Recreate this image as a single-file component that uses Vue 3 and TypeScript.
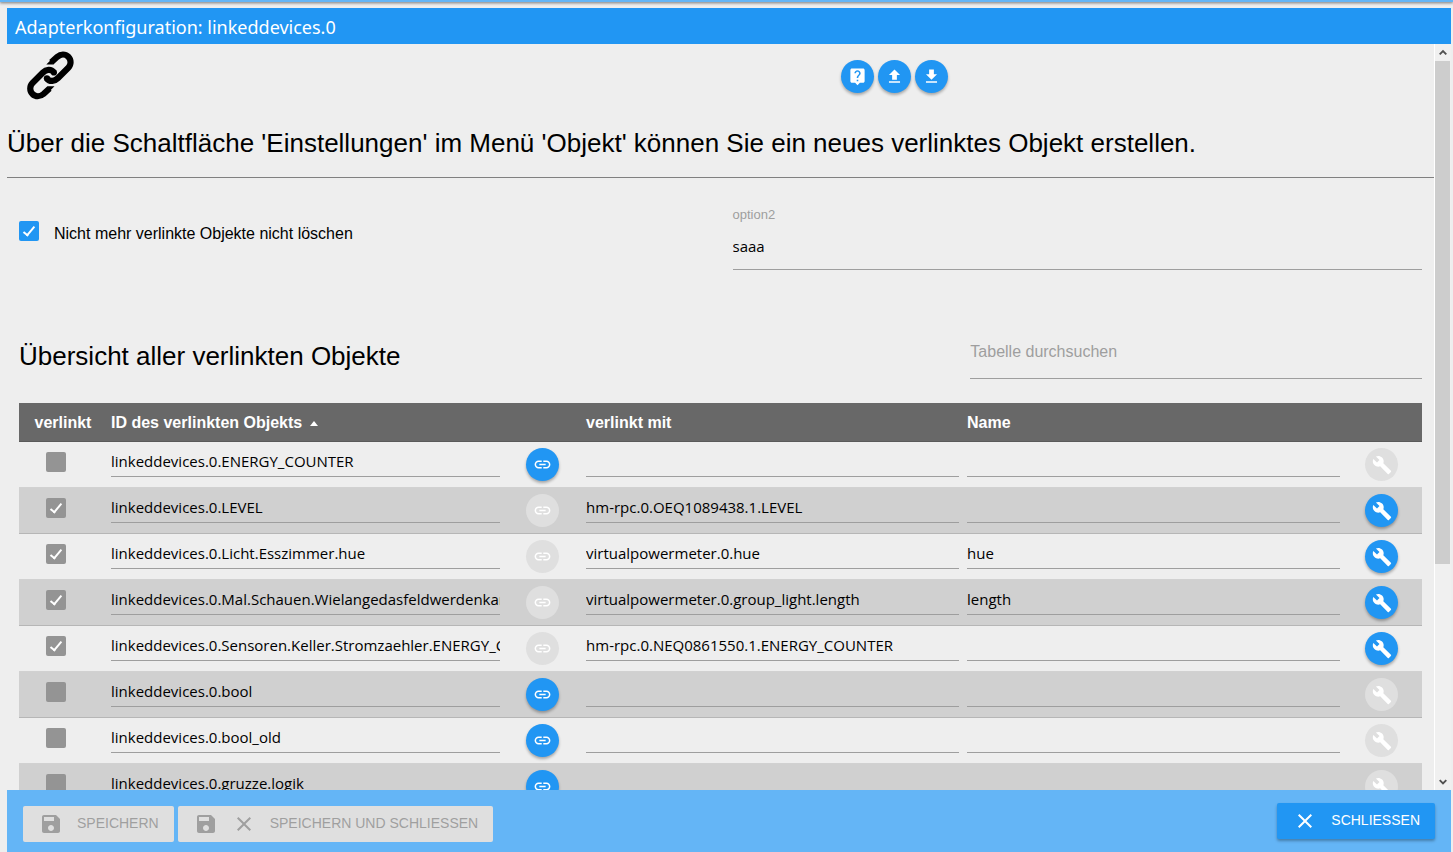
<script setup lang="ts">
import { ref, computed } from 'vue'

interface LinkedObject {
  id: string
  target: string
  name: string
  linked: boolean
}

const icons = {
  help: 'M19 2H5c-1.11 0-2 .9-2 2v14c0 1.1.89 2 2 2h4l3 3 3-3h4c1.1 0 2-.9 2-2V4c0-1.1-.9-2-2-2zm-6 16h-2v-2h2v2zm2.07-7.75l-.9.92C13.45 11.9 13 12.5 13 14h-2v-.5c0-1.1.45-2.1 1.17-2.83l1.24-1.26c.37-.36.59-.86.59-1.41 0-1.1-.9-2-2-2s-2 .9-2 2H8c0-2.21 1.79-4 4-4s4 1.79 4 4c0 .88-.36 1.68-.93 2.25z',
  upload: 'M9 16h6v-6h4l-7-7-7 7h4zm-4 2h14v2H5z',
  download: 'M19 9h-4V3H9v6H5l7 7 7-7zM5 18v2h14v-2H5z',
  link: 'M3.9 12c0-1.71 1.39-3.1 3.1-3.1h4V7H7c-2.76 0-5 2.24-5 5s2.24 5 5 5h4v-1.9H7c-1.71 0-3.1-1.39-3.1-3.1zM8 13h8v-2H8v2zm9-6h-4v1.9h4c1.71 0 3.1 1.39 3.1 3.1s-1.39 3.1-3.1 3.1h-4V17h4c2.76 0 5-2.24 5-5s-2.24-5-5-5z',
  build: 'M22.7 19l-9.1-9.1c.9-2.3.4-5-1.5-6.9-2-2-5-2.4-7.4-1.3L9 6 6 9 1.6 4.7C.4 7.1.9 10.1 2.9 12.1c1.9 1.9 4.6 2.4 6.9 1.5l9.1 9.1c.4.4 1 .4 1.4 0l2.3-2.3c.5-.4.5-1.1.1-1.4z',
  save: 'M17 3H5c-1.11 0-2 .9-2 2v14c0 1.1.89 2 2 2h14c1.1 0 2-.9 2-2V7l-4-4zm-5 16c-1.66 0-3-1.34-3-3s1.34-3 3-3 3 1.34 3 3-1.34 3-3 3zm3-10H5V5h10v4z',
  close: 'M19 6.41L17.59 5 12 10.59 6.41 5 5 6.41 10.59 12 5 17.59 6.41 19 12 13.41 17.59 19 19 17.59 13.41 12z',
}

const tools = [
  { label: 'Hilfe', path: icons.help },
  { label: 'Hochladen', path: icons.upload },
  { label: 'Herunterladen', path: icons.download },
]

const keepUnlinked = ref(true)
const option2 = ref('saaa')
const search = ref('')

const objects = ref<LinkedObject[]>([
  { id: 'linkeddevices.0.ENERGY_COUNTER', target: '', name: '', linked: false },
  { id: 'linkeddevices.0.LEVEL', target: 'hm-rpc.0.OEQ1089438.1.LEVEL', name: '', linked: true },
  { id: 'linkeddevices.0.Licht.Esszimmer.hue', target: 'virtualpowermeter.0.hue', name: 'hue', linked: true },
  { id: 'linkeddevices.0.Mal.Schauen.Wielangedasfeldwerdenkann', target: 'virtualpowermeter.0.group_light.length', name: 'length', linked: true },
  { id: 'linkeddevices.0.Sensoren.Keller.Stromzaehler.ENERGY_COUNTER', target: 'hm-rpc.0.NEQ0861550.1.ENERGY_COUNTER', name: '', linked: true },
  { id: 'linkeddevices.0.bool', target: '', name: '', linked: false },
  { id: 'linkeddevices.0.bool_old', target: '', name: '', linked: false },
  { id: 'linkeddevices.0.gruzze.logik', target: '', name: '', linked: false },
])

const visibleObjects = computed(() => {
  const term = search.value.toLowerCase()
  return objects.value.filter((o) => `${o.id} ${o.target} ${o.name}`.toLowerCase().includes(term))
})
</script>

<template>
  <div class="page">
    <div class="strip"></div>
    <header class="title">Adapterkonfiguration: linkeddevices.0</header>

    <div class="body">
      <main class="content">
        <div class="top">
          <svg class="logo" viewBox="0 0 50 50" aria-hidden="true">
            <g fill="none" stroke="#000" stroke-width="6.2">
              <path d="M23.5 37.5 17.5 43C14 46 9.5 46 6.5 43 3.5 40 3.5 35 6.5 32L17 21.5C20 18.5 25 17.5 28 21.5" />
              <path d="M25.3 11.3 31.3 5.8C34.8 2.8 39.3 2.8 42.3 5.8 45.3 8.8 45.3 13.8 42.3 16.8L31.8 27.3C28.8 30.3 23.8 31.3 20.8 27.3" />
            </g>
            <path d="M21.3 35.3H28.5L24 39.8ZM27.5 13.5H20.3L24.8 9Z" />
            <circle cx="27.9" cy="21.5" r="3.1" />
            <circle cx="20.9" cy="27.3" r="3.1" />
          </svg>
          <div class="tools">
            <button v-for="t in tools" :key="t.label" type="button" class="round" :aria-label="t.label">
              <svg viewBox="0 0 24 24"><path :d="t.path" /></svg>
            </button>
          </div>
        </div>

        <h1 class="intro">Über die Schaltfläche 'Einstellungen' im Menü 'Objekt' können Sie ein neues verlinktes Objekt erstellen.</h1>

        <div class="options">
          <div class="option keep">
            <input id="keep" v-model="keepUnlinked" type="checkbox" class="check" />
            <label for="keep">Nicht mehr verlinkte Objekte nicht löschen</label>
          </div>
          <div class="option">
            <label for="option2" class="small-label">option2</label>
            <input id="option2" v-model="option2" type="text" class="field tall" />
          </div>
        </div>

        <div class="overview">
          <h2>Übersicht aller verlinkten Objekte</h2>
          <input v-model="search" type="text" class="field search" placeholder="Tabelle durchsuchen" aria-label="Tabelle durchsuchen" />
        </div>

        <div class="table-wrap">
          <table>
            <colgroup>
              <col class="c-linked" />
              <col class="c-id" />
              <col class="c-action" />
              <col />
              <col />
              <col class="c-action" />
            </colgroup>
            <thead>
              <tr>
                <th class="center">verlinkt</th>
                <th>ID des verlinkten Objekts<span class="sort"></span></th>
                <th></th>
                <th>verlinkt mit</th>
                <th>Name</th>
                <th></th>
              </tr>
            </thead>
            <tbody>
              <tr v-for="o in visibleObjects" :key="o.id">
                <td class="mark"><input type="checkbox" class="check" :checked="o.linked" disabled aria-label="verlinkt" /></td>
                <td><input type="text" class="field" :value="o.id" readonly aria-label="ID des verlinkten Objekts" /></td>
                <td class="action">
                  <button type="button" class="round" :disabled="o.linked" aria-label="Verlinken">
                    <svg class="chain" viewBox="0 0 24 24"><path :d="icons.link" /></svg>
                  </button>
                </td>
                <td><input type="text" class="field" :value="o.target" readonly aria-label="verlinkt mit" /></td>
                <td><input type="text" class="field" :value="o.name" readonly aria-label="Name" /></td>
                <td class="action last">
                  <button type="button" class="round" :disabled="!o.linked" aria-label="Bearbeiten">
                    <svg viewBox="0 0 24 24"><path :d="icons.build" /></svg>
                  </button>
                </td>
              </tr>
            </tbody>
          </table>
        </div>
      </main>

      <div class="scrollbar" aria-hidden="true">
        <svg class="arrow" viewBox="0 0 17 17"><path d="M5 10.5 8.5 7 12 10.5" /></svg>
        <div class="track"><div class="thumb"></div></div>
        <svg class="arrow" viewBox="0 0 17 17"><path d="M5 7 8.5 10.5 12 7" /></svg>
      </div>
    </div>

    <footer class="footer">
      <button type="button" class="btn" disabled>
        <svg viewBox="0 0 24 24"><path :d="icons.save" /></svg>
        <span>SPEICHERN</span>
      </button>
      <button type="button" class="btn" disabled>
        <svg viewBox="0 0 24 24"><path :d="icons.save" /></svg>
        <svg viewBox="0 0 24 24"><path :d="icons.close" /></svg>
        <span>SPEICHERN UND SCHLIESSEN</span>
      </button>
      <button type="button" class="btn primary">
        <svg viewBox="0 0 24 24"><path :d="icons.close" /></svg>
        <span>SCHLIESSEN</span>
      </button>
    </footer>
  </div>
</template>

<style>
body {
  background: #eee;
}
</style>

<style scoped>
.page {
  display: flex;
  flex-direction: column;
  height: 100vh;
  overflow: hidden;
  box-sizing: border-box;
  padding: 0 2px 0 7px;
  background: #eee;
  color: #000;
  font: 16px/24px "Liberation Sans", Arial, sans-serif;
}
.page *,
.page *::after {
  box-sizing: border-box;
}
.strip {
  flex: none;
  height: 2px;
  margin: 0 -2px 6px -7px;
  background: #64b5f6;
  box-shadow: 0 1px 3px rgba(0, 0, 0, 0.6);
}
.title {
  flex: none;
  height: 36px;
  padding: 0 8px;
  background: #2196f3;
  color: #fff;
  font: 18px/38px "Noto Sans", "Open Sans", sans-serif;
}
.body {
  flex: 1;
  display: flex;
  min-height: 0;
}
.content {
  flex: 1;
  min-width: 0;
  overflow-y: auto;
  scrollbar-width: none;
}
.top {
  display: grid;
  grid-template-columns: 7fr 5fr;
  height: 76px;
  padding-top: 7px;
}
.logo {
  width: 50px;
  height: 50px;
  margin-left: 19px;
}
.tools {
  display: flex;
  gap: 4px;
  padding: 9px 2px;
}
.round {
  display: flex;
  align-items: center;
  justify-content: center;
  width: 33px;
  height: 33px;
  padding: 0;
  border: 0;
  border-radius: 50%;
  background: #2196f3;
  box-shadow: 0 2px 3px rgba(0, 0, 0, 0.3);
}
.round svg {
  width: 20px;
  height: 20px;
  fill: #fff;
}
.tools .round svg,
.round .chain {
  width: 19px;
  height: 19px;
}
.round:disabled {
  background: #dfdfdf;
  box-shadow: none;
}
.intro,
h2 {
  margin: 0;
  font-size: 26px;
  font-weight: 400;
  line-height: 30px;
}
.intro {
  padding: 8px 0 19px;
  border-bottom: 1px solid #808080;
}
.options {
  display: grid;
  grid-template-columns: 1fr 1fr;
  height: 150px;
}
.option {
  padding: 28px 12px 0;
}
.keep {
  display: flex;
  gap: 15px;
  padding-top: 43px;
}
.keep label {
  line-height: 26px;
}
.check {
  appearance: none;
  position: relative;
  flex: none;
  width: 20px;
  height: 20px;
  margin: 0;
  border-radius: 2px;
  background: #949494;
}
.keep .check {
  background: #2196f3;
}
.check:checked::after {
  content: "";
  position: absolute;
  left: 7px;
  top: 3px;
  width: 6px;
  height: 12px;
  border: solid #fff;
  border-width: 0 2px 2px 0;
  transform: rotate(40deg);
}
.small-label {
  display: block;
  color: #9e9e9e;
  font-size: 13px;
  line-height: 18px;
}
.field {
  display: block;
  width: 100%;
  height: 30px;
  padding: 0 0 2px;
  border: 0;
  border-bottom: 1px solid #9e9e9e;
  border-radius: 0;
  outline: 0;
  background: transparent;
  color: #000;
  font: 15px/20px "Open Sans", "Noto Sans", sans-serif;
}
.tall {
  height: 46px;
}
.overview {
  display: grid;
  grid-template-columns: 2fr 1fr;
  height: 75px;
}
.overview h2 {
  padding: 13px 12px 0;
}
.search {
  width: auto;
  height: 51px;
  margin: 0 12px;
  padding-bottom: 2px;
  font: 16px/24px "Liberation Sans", Arial, sans-serif;
}
.search::placeholder {
  color: #9e9e9e;
  opacity: 1;
}
.table-wrap {
  padding: 0 12px;
}
table {
  width: 100%;
  table-layout: fixed;
  border-collapse: separate;
  border-spacing: 0;
}
.c-linked {
  width: 88px;
}
.c-id {
  width: 28.3%;
}
.c-action {
  width: 78px;
}
th {
  height: 39px;
  padding: 2px 4px 0;
  border-bottom: 1px solid #5a5a5a;
  background: #686868;
  color: #fff;
  text-align: left;
  font-weight: 700;
  line-height: 20px;
}
th.center {
  text-align: center;
}
.sort {
  display: inline-block;
  margin-left: 8px;
  border: solid transparent;
  border-width: 0 4px 5px;
  border-bottom-color: #fff;
  vertical-align: 2px;
}
td {
  height: 46px;
  padding: 5px 4px 0;
  border-bottom: 1px solid rgba(0, 0, 0, 0.12);
  vertical-align: top;
}
tbody tr:nth-child(even) {
  background: #d0d0d0;
}
.mark {
  padding: 10px 27px 0;
}
.action {
  padding: 6px 22px 0;
}
.last {
  padding-left: 21px;
}
.scrollbar {
  flex: none;
  display: flex;
  flex-direction: column;
  width: 17px;
  border-left: 1px solid #fff;
  background: #f0f0f0;
}
.arrow {
  width: 16px;
  height: 17px;
  fill: none;
  stroke: #505050;
  stroke-width: 2;
}
.track {
  flex: 1;
}
.thumb {
  width: 15px;
  height: 70.6%;
  background: #cdcdcd;
}
.footer {
  flex: none;
  display: flex;
  gap: 4px;
  height: 62px;
  padding: 16px 16px 0;
  background: #64b5f6;
}
.btn {
  display: flex;
  align-items: center;
  gap: 14px;
  height: 36px;
  padding: 0 15px 0 16px;
  border: 0;
  border-radius: 2px;
  background: #dfdfdf;
  color: #9f9f9f;
  font: 14px/34px "Liberation Sans", Arial, sans-serif;
  white-space: nowrap;
}
.btn span {
  height: 36px;
}
.btn svg {
  width: 24px;
  height: 24px;
  fill: currentColor;
}
.primary {
  margin: -3px 0 0 auto;
  background: #2196f3;
  color: #fff;
  box-shadow: 0 2px 3px rgba(0, 0, 0, 0.3);
}
</style>
